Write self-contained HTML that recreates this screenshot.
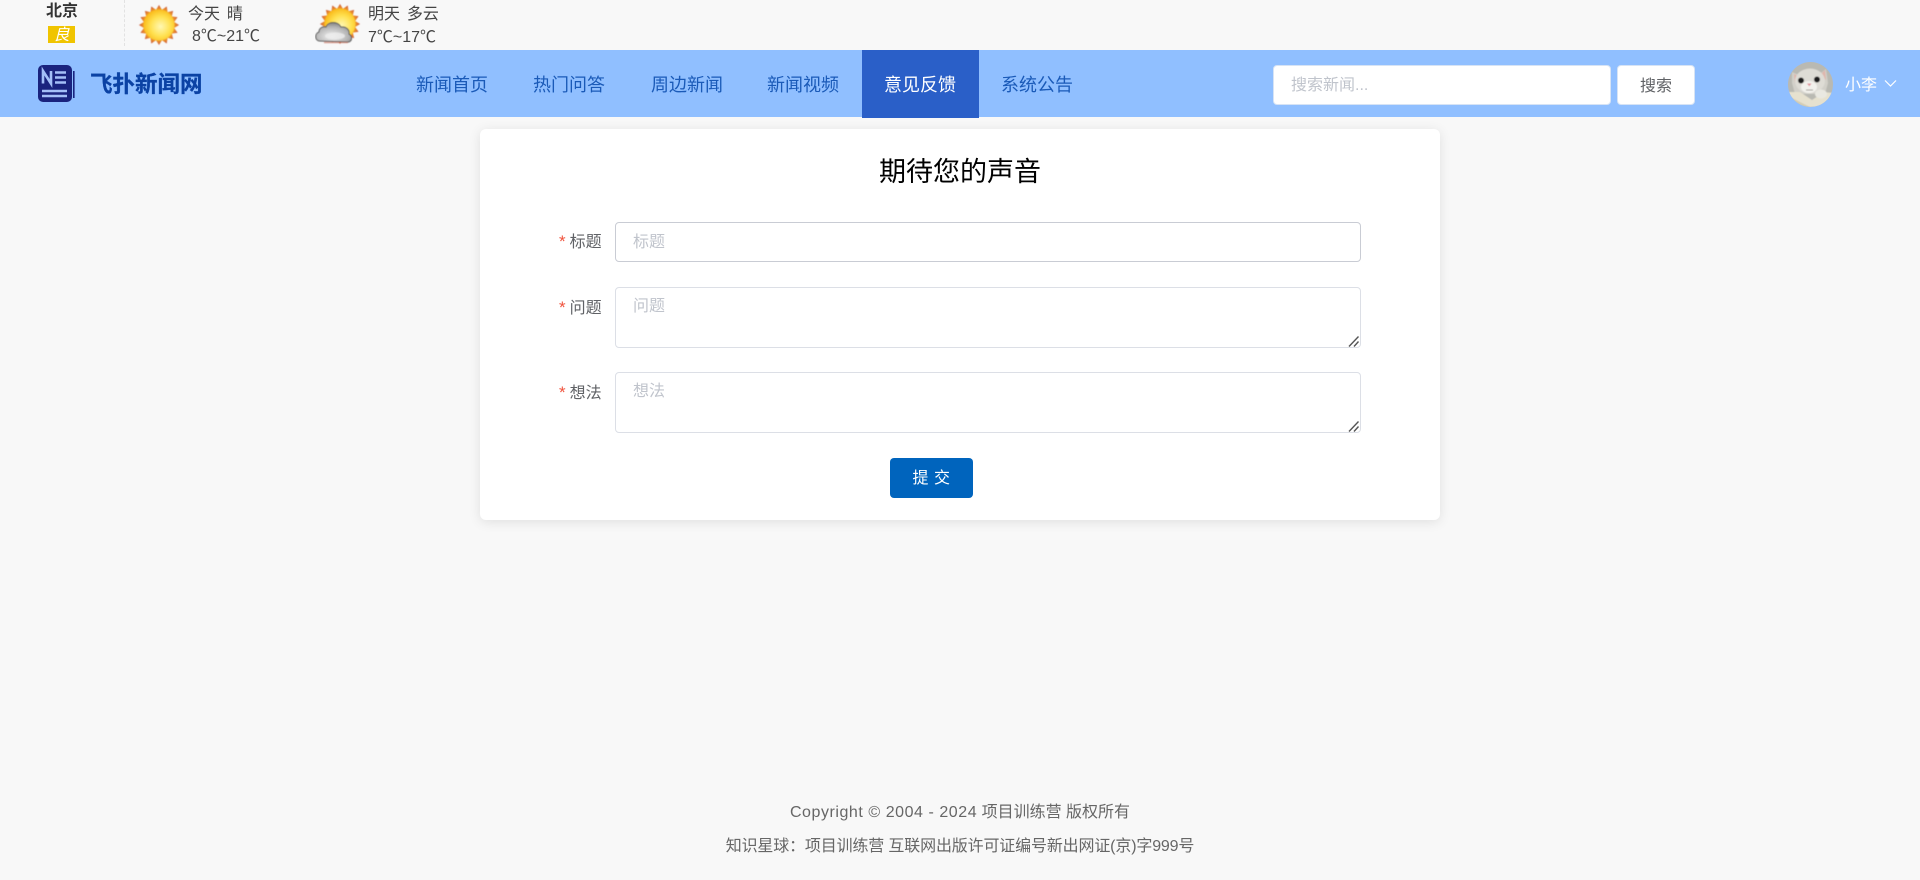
<!DOCTYPE html>
<html lang="zh-CN">
<head>
<meta charset="utf-8">
<title>意见反馈</title>
<style>
*{box-sizing:border-box}
html,body{margin:0;padding:0}
body{width:1920px;height:880px;position:relative;overflow:hidden;background:#f8f8f8;font-family:"Liberation Sans","Noto Sans CJK SC",sans-serif;color:#444}
.a{position:absolute;white-space:nowrap}
.nav{position:absolute;left:0;top:50px;width:1920px;height:67px;background:#90bfff}
.item{position:absolute;top:50px;height:68px;width:116px;text-align:center;line-height:71px;font-size:18px;color:#1a5ab8}
.item.on{background:#2a5fc8;color:#fff;width:117px;padding-right:1px}
.field{position:absolute;left:615px;width:746px;border:1px solid #dcdfe6;border-radius:4px;background:#fff;font:16px "Liberation Sans","Noto Sans CJK SC",sans-serif;padding:2px 17px 0;outline:none;color:#606266;margin:0;display:block}
textarea.field{padding:7px 17px 5px;resize:none;line-height:24px}
input::placeholder,textarea::placeholder{color:#c0c4cc;opacity:1}
.lab{position:absolute;left:559px;font-size:16px;color:#606266;line-height:24px}
.lab b{color:#f0523c;font-weight:400;margin-right:4px;font-family:"Liberation Sans",sans-serif;font-size:17px}
</style>
</head>
<body>
<div class="a" style="left:46px;top:1px;font-size:16px;font-weight:700;line-height:22px;color:#333">北京</div>
<div class="a" style="left:48px;top:26px;width:27px;height:17px;background:#f0c400;color:#fff;font-size:16px;font-style:italic;line-height:19px;text-align:center;overflow:hidden">良</div>
<div class="a" style="left:124px;top:0;height:46px;border-left:1px dashed #e2e2e2"></div>

<svg class="a" style="left:136px;top:2px" width="46" height="46" viewBox="-23 -23 46 46">
<defs>
<polygon id="st" points="20,0 15.2,3 18.5,7.7 12.9,8.6 14.1,14.1 8.6,12.9 7.7,18.5 3,15.2 0,20 -3,15.2 -7.7,18.5 -8.6,12.9 -14.1,14.1 -12.9,8.6 -18.5,7.7 -15.2,3 -20,0 -15.2,-3 -18.5,-7.7 -12.9,-8.6 -14.1,-14.1 -8.6,-12.9 -7.7,-18.5 -3,-15.2 0,-20 3,-15.2 7.7,-18.5 8.6,-12.9 14.1,-14.1 12.9,-8.6 18.5,-7.7 15.2,-3"/>
<radialGradient id="ray"><stop offset=".7" stop-color="#f8a820"/><stop offset=".88" stop-color="#e07a30"/><stop offset="1" stop-color="#c04c3a"/></radialGradient>
<radialGradient id="sun" cx=".55" cy=".55" r=".6"><stop offset="0" stop-color="#fff8b4"/><stop offset=".55" stop-color="#ffe04e"/><stop offset="1" stop-color="#f9b412"/></radialGradient>
<radialGradient id="cl" cx=".45" cy=".7" r=".85"><stop offset="0" stop-color="#f2f2f2"/><stop offset=".55" stop-color="#b4b4b4"/><stop offset="1" stop-color="#5f5f5f"/></radialGradient>
<filter id="bl"><feGaussianBlur stdDeviation=".6"/></filter>
</defs>
<g filter="url(#bl)"><use href="#st" fill="url(#ray)"/><circle r="15.500" fill="url(#sun)"/></g>
</svg>
<div class="a" style="left:188px;top:3px;font-size:16px;line-height:24px;word-spacing:-1px">今天&nbsp; 晴</div>
<div class="a" style="left:192px;top:25px;font-size:16px;line-height:24px">8℃~21℃</div>

<svg class="a" style="left:315px;top:2px" width="46" height="46" viewBox="-23 -23 46 46">
<g filter="url(#bl)"><g transform="translate(2,-1)"><use href="#st" fill="url(#ray)"/><circle r="15.500" fill="url(#sun)"/></g>
<path d="M-18 16c-5 0-6-7-1-9 0-4 4-6 7-5 2-6 12-6 15 0 5-1 9 3 8 7 4 2 3 8-1 8z" fill="url(#cl)" stroke="#555" stroke-width="1"/>
<ellipse cx="-3" cy="11" rx="10" ry="3.500" fill="#ececec" opacity=".8"/>
<path d="M-14 17.500h24" stroke="#c8705a" stroke-width="1.500" opacity=".6"/></g>
</svg>
<div class="a" style="left:368px;top:3px;font-size:16px;line-height:24px;word-spacing:-1px">明天&nbsp; 多云</div>
<div class="a" style="left:368px;top:26px;font-size:16px;line-height:24px">7℃~17℃</div>

<div class="nav"></div>
<svg class="a" style="left:38px;top:64px" width="38" height="38" viewBox="0 0 38 38">
<rect x="0" y="1" width="34" height="37" rx="5" fill="#1a237e"/>
<path d="M35.800 7V34" stroke="#1a237e" stroke-width="1.600" fill="none"/>
<path d="M5 19.500V7l8 12.500V7" stroke="#a4bff7" stroke-width="2.600" fill="none"/>
<path d="M17 8.500h11M17 13.500h11M17 18.500h11M4 27h25M4 32h25" stroke="#a4bff7" stroke-width="2.400" fill="none"/>
</svg>
<div class="a" style="left:90px;top:68px;font-size:22.500px;font-weight:700;line-height:34px;color:#0b42a4;-webkit-text-stroke:.3px #0b42a4">飞扑新闻网</div>

<div class="item" style="left:394px">新闻首页</div>
<div class="item" style="left:511px">热门问答</div>
<div class="item" style="left:629px">周边新闻</div>
<div class="item" style="left:745px">新闻视频</div>
<div class="item on" style="left:862px">意见反馈</div>
<div class="item" style="left:979px">系统公告</div>

<input class="a" placeholder="搜索新闻..." style="left:1273px;top:65px;width:338px;height:40px;border:1px solid #d6e3f5;border-radius:4px;padding:2px 17px 0;font:16px 'Liberation Sans','Noto Sans CJK SC',sans-serif;outline:none;background:#fff">
<div class="a" style="left:1617px;top:65px;width:78px;height:40px;border:1px solid #d6e3f5;border-radius:4px;background:#fff;text-align:center;font-size:16px;line-height:41px;color:#606266">搜索</div>

<svg class="a" style="left:1788px;top:62px" width="45" height="45" viewBox="0 0 45 45">
<defs><clipPath id="c"><circle cx="22.500" cy="22.500" r="22.500"/></clipPath><filter id="b2"><feGaussianBlur stdDeviation=".4"/></filter></defs>
<g clip-path="url(#c)"><rect width="45" height="45" fill="#b9b9b2"/>
<g filter="url(#b2)">
<path d="M4 10l9 4 16 0 9-7 2 14-3 11-30 0-3-11z" fill="#d2d0c9"/>
<path d="M6 12l6 3-5 6zM37 8l1 10-6-5z" fill="#dfb5ac"/>
<ellipse cx="22" cy="19" rx="15" ry="12.500" fill="#dedcd5"/>
<ellipse cx="21" cy="25" rx="8" ry="6" fill="#f2f1ec"/>
<path d="M0 30l12 0 12 8 12-8 9 1v14H0z" fill="#e6e1cf"/>
<path d="M0 34l22 11H0z" fill="#d2ccb5"/>
<ellipse cx="33" cy="32" rx="6" ry="4.500" fill="#e9e8e1"/>
<circle cx="13" cy="18.500" r="3" fill="#1c1c1c"/><circle cx="29" cy="17.500" r="3" fill="#1c1c1c"/>
<path d="M19 21.500h4.500l-2.200 2.800z" fill="#e08f98"/>
<path d="M18 28h7" stroke="#a0a098" stroke-width="1"/>
</g></g>
</svg>
<div class="a" style="left:1845px;top:74px;font-size:16px;line-height:24px;color:#fff">小李</div>
<svg class="a" style="left:1884px;top:79px" width="13" height="9" viewBox="0 0 13 9"><path d="M1 1.500l5.500 5.500 5.500-5.500" stroke="#fff" stroke-width="1.200" fill="none"/></svg>

<div class="a" style="left:480px;top:129px;width:960px;height:391px;background:#fff;border-radius:6px;box-shadow:0 2px 12px rgba(0,0,0,.1)"></div>
<div class="a" style="left:480px;top:152px;width:960px;text-align:center;font-size:27px;line-height:40px;color:#000">期待您的声音</div>

<div class="lab" style="top:230px"><b>*</b>标题</div>
<input class="field" placeholder="标题" style="top:222px;height:40px;border-color:#c9ccd4">
<div class="lab" style="top:296px"><b>*</b>问题</div>
<textarea class="field" placeholder="问题" style="top:287px;height:61px"></textarea>
<div class="lab" style="top:381px"><b>*</b>想法</div>
<textarea class="field" placeholder="想法" style="top:372px;height:61px"></textarea>
<svg class="a" style="left:1347px;top:335px" width="13" height="12" viewBox="0 0 13 12"><path d="M2 11.500L11.500 1.500M7 11.500L11.500 6.500" stroke="#555" stroke-width="1.400" fill="none"/></svg>
<svg class="a" style="left:1347px;top:420px" width="13" height="12" viewBox="0 0 13 12"><path d="M2 11.500L11.500 1.500M7 11.500L11.500 6.500" stroke="#555" stroke-width="1.400" fill="none"/></svg>

<div class="a" style="left:890px;top:458px;width:83px;height:40px;border-radius:4px;background:#0064bd"></div>
<div class="a" style="left:890px;top:458px;width:83px;height:40px;text-align:center;font-size:16px;line-height:42px;color:#fff;letter-spacing:.5px">提 交</div>

<div class="a" style="left:0;top:801px;width:1920px;text-align:center;font-size:16px;line-height:24px;color:#666"><span style="letter-spacing:.55px">Copyright © 2004 - 2024</span> 项目训练营 版权所有</div>
<div class="a" style="left:0;top:835px;width:1920px;text-align:center;font-size:16px;line-height:24px;color:#666;letter-spacing:-.16px">知识星球：项目训练营 互联网出版许可证编号新出网证(京)字999号</div>
</body>
</html>
